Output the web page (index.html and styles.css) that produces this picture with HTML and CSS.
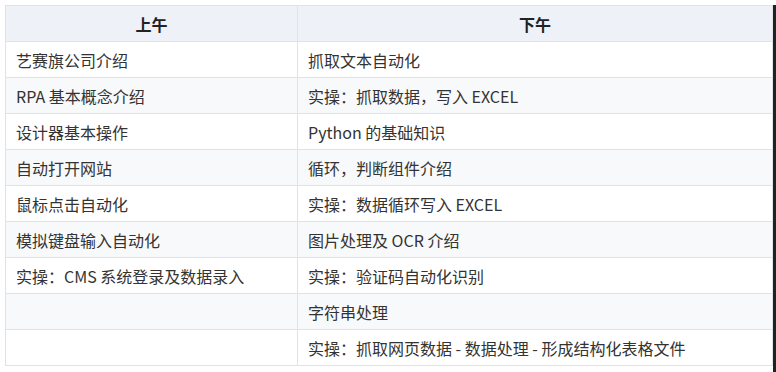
FILE: index.html
```html
<!DOCTYPE html>
<html lang="zh">

<head>
    <meta charset="UTF-8">
    <title>课程安排</title>
    <link rel="stylesheet" href="styles.css">
</head>

<body>
    <div class="page">
        <table class="schedule">
            <thead>
                <tr>
                    <th class="col-am">上午</th>
                    <th>下午</th>
                </tr>
            </thead>
            <tbody>
                <tr>
                    <td>艺赛旗公司介绍</td>
                    <td>抓取文本自动化</td>
                </tr>
                <tr>
                    <td>RPA 基本概念介绍</td>
                    <td>实操：抓取数据，写入 EXCEL</td>
                </tr>
                <tr>
                    <td>设计器基本操作</td>
                    <td>Python 的基础知识</td>
                </tr>
                <tr>
                    <td>自动打开网站</td>
                    <td>循环，判断组件介绍</td>
                </tr>
                <tr>
                    <td>鼠标点击自动化</td>
                    <td>实操：数据循环写入 EXCEL</td>
                </tr>
                <tr>
                    <td>模拟键盘输入自动化</td>
                    <td>图片处理及 OCR 介绍</td>
                </tr>
                <tr>
                    <td>实操：CMS 系统登录及数据录入</td>
                    <td>实操：验证码自动化识别</td>
                </tr>
                <tr>
                    <td></td>
                    <td>字符串处理</td>
                </tr>
                <tr>
                    <td></td>
                    <td>实操：抓取网页数据 - 数据处理 - 形成结构化表格文件</td>
                </tr>
            </tbody>
        </table>
        <div class="edge"></div>
    </div>
</body>

</html>
```

FILE: styles.css
```css
body {
    margin: 0;
    background: #fff;
    font-family: "Noto Sans CJK SC", "Noto Sans", sans-serif;
    color: #333;
}

.page {
    display: flex;
    height: 372px;
    padding: 5px 0 0 5px;
    box-sizing: border-box;
}

.schedule {
    width: 768px;
    border-collapse: collapse;
    table-layout: fixed;
    font-size: 16px;
    align-self: flex-start;
}

.col-am {
    width: 292px;
}

.schedule th,
.schedule td {
    height: 36px;
    padding: 0 10px;
    border: 1px solid #dfe2e6;
    text-align: left;
    line-height: 20px;
    box-sizing: border-box;
}

.schedule th {
    background: #eef1f7;
    text-align: center;
    font-weight: bold;
    color: #222;
}

.schedule tbody tr:nth-child(even) td {
    background: #f8f9fa;
}

.edge {
    margin-left: auto;
    width: 3px;
    background: #222;
}
```
